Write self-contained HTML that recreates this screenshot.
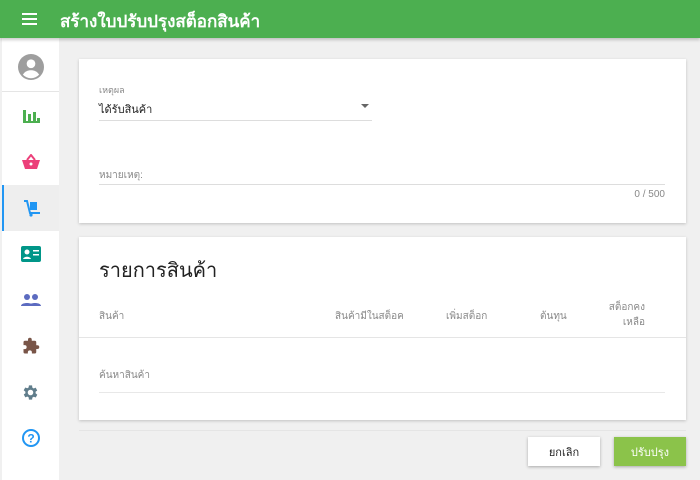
<!DOCTYPE html>
<html><head><meta charset="utf-8"><style>
*{box-sizing:border-box;margin:0;padding:0}
body{width:700px;height:480px;overflow:hidden;background:#f0f0f0;font-family:"Liberation Sans","DejaVu Sans",sans-serif;position:relative}
.hdr{position:absolute;left:0;top:0;width:700px;height:38px;background:#4caf50;box-shadow:0 2px 3px rgba(0,0,0,.2);z-index:2}
.hdr .t{position:absolute;left:60px;top:8px;color:#fff;font-size:17px;font-weight:bold}
.side{position:absolute;left:2px;top:38px;width:57px;height:442px;background:#fff}
.ic{position:absolute;left:0;width:57px;height:46px;display:flex;align-items:center;justify-content:center}
.card{position:absolute;left:79px;width:607px;background:#fff;box-shadow:0 1px 3px rgba(0,0,0,.2)}
.lbl{position:absolute;font-size:10px;color:#888}
.line{position:absolute;height:1px;background:#ddd}
.th{position:absolute;font-size:10px;color:#888}
.btn{position:absolute;top:437px;width:72px;height:29px;font-size:11px;display:flex;align-items:center;justify-content:center;box-shadow:0 1px 3px rgba(0,0,0,.3)}
</style></head><body>
<div class="hdr">
<svg style="position:absolute;left:22px;top:13px" width="15" height="12"><rect y="0" width="15" height="2" fill="#fff"/><rect y="5" width="15" height="2" fill="#fff"/><rect y="10" width="15" height="2" fill="#fff"/></svg>
<div class="t">สร้างใบปรับปรุงสต็อกสินค้า</div></div>
<div class="side">
<div class="ic" style="top:4px;height:50px;border-bottom:1px solid #e5e5e5"><svg width="26" height="26" viewBox="0 0 24 24"><circle cx="12" cy="12" r="12" fill="#9e9e9e"/><circle cx="12" cy="9" r="4" fill="#fff"/><path d="M4.5 19c2-3 4.5-4 7.5-4s5.5 1 7.5 4a10 10 0 0 1-15 0z" fill="#fff"/></svg></div>
<div class="ic" style="top:55px"><svg width="18" height="16"><rect x="1" y="2" width="3" height="13" fill="#4caf50"/><rect x="6" y="6" width="3" height="9" fill="#4caf50"/><rect x="11" y="4" width="3" height="11" fill="#4caf50"/><rect x="15" y="10" width="3" height="5" fill="#4caf50"/><rect x="1" y="13" width="17" height="2" fill="#4caf50"/></svg></div>
<div class="ic" style="top:101px"><svg width="18" height="16"><path d="M5 6L9 1 13 6" stroke="#ec407a" stroke-width="2" fill="none"/><path d="M0 6h18l-3 9H3z" fill="#ec407a"/><circle cx="9" cy="10" r="1.5" fill="#fff"/></svg></div>
<div class="ic" style="top:147px;background:#eee;border-left:2px solid #2196f3"><svg width="18" height="18"><path d="M1 2h3l3 12h10" stroke="#2196f3" stroke-width="2" fill="none"/><rect x="7" y="3" width="7" height="8" fill="#2196f3"/><circle cx="8" cy="16" r="1.6" fill="#2196f3"/></svg></div>
<div class="ic" style="top:193px"><svg width="20" height="16"><rect width="20" height="16" rx="2" fill="#009688"/><circle cx="6" cy="6" r="2.5" fill="#fff"/><path d="M2 13c1-3 7-3 8 0z" fill="#fff"/><rect x="12" y="4" width="6" height="1.5" fill="#fff"/><rect x="12" y="8" width="6" height="1.5" fill="#fff"/></svg></div>
<div class="ic" style="top:239px"><svg width="20" height="14"><circle cx="6" cy="4" r="3" fill="#5c6bc0"/><circle cx="14" cy="4" r="3" fill="#5c6bc0"/><path d="M0 13c0-4 12-4 12 0zM8 13c0-4 12-4 12 0z" fill="#5c6bc0"/></svg></div>
<div class="ic" style="top:285px"><svg width="18" height="18" viewBox="0 0 24 24"><path d="M20.5 11H19V7a2 2 0 0 0-2-2h-4V3.5a2.5 2.5 0 0 0-5 0V5H4a2 2 0 0 0-2 2v3.8h1.5a2.7 2.7 0 0 1 0 5.4H2V20a2 2 0 0 0 2 2h3.8v-1.5a2.7 2.7 0 0 1 5.4 0V22H17a2 2 0 0 0 2-2v-4h1.5a2.5 2.5 0 0 0 0-5z" fill="#795548"/></svg></div>
<div class="ic" style="top:331px"><svg width="19" height="19" viewBox="0 0 24 24"><path d="M19.4 13a7.5 7.5 0 0 0 0-2l2.1-1.6-2-3.5-2.5 1a7 7 0 0 0-1.7-1L15 3h-4l-.4 2.7a7 7 0 0 0-1.7 1l-2.5-1-2 3.5L6.6 11a7.5 7.5 0 0 0 0 2l-2.1 1.6 2 3.5 2.5-1a7 7 0 0 0 1.7 1L11 21h4l.4-2.7a7 7 0 0 0 1.7-1l2.5 1 2-3.5zM13 15.5a3.5 3.5 0 1 1 0-7 3.5 3.5 0 0 1 0 7z" fill="#607d8b" transform="translate(-1 0)"/></svg></div>
<div class="ic" style="top:377px"><svg width="18" height="18"><circle cx="9" cy="9" r="8" stroke="#2196f3" stroke-width="2" fill="none"/><text x="9" y="13.5" font-size="12" font-family="Liberation Sans" font-weight="bold" fill="#2196f3" text-anchor="middle">?</text></svg></div>
</div>

<div class="card" style="top:59px;height:164px">
<div class="lbl" style="left:20px;top:24px;font-size:9px">เหตุผล</div>
<div style="position:absolute;left:20px;top:41px;font-size:11px;color:#222">ได้รับสินค้า</div>
<svg style="position:absolute;left:282px;top:45px" width="8" height="4"><path d="M0 0h8L4 4z" fill="#666"/></svg>
<div class="line" style="left:20px;top:61px;width:273px"></div>
<div class="lbl" style="left:20px;top:109px">หมายเหตุ:</div>
<div class="line" style="left:20px;top:125px;width:566px"></div>
<div class="lbl" style="right:21px;top:130px">0 / 500</div>
</div>

<div class="card" style="top:237px;height:183px">
<div style="position:absolute;left:20px;top:17px;font-size:20px;color:#222">รายการสินค้า</div>
<div class="th" style="left:20px;top:72px">สินค้า</div>
<div class="th" style="left:256px;top:72px">สินค้ามีในสต็อค</div>
<div class="th" style="left:367px;top:72px">เพิ่มสต็อก</div>
<div class="th" style="left:461px;top:72px">ต้นทุน</div>
<div class="th" style="left:520px;top:63px;width:46px;text-align:right;line-height:15px">สต็อกคงเหลือ</div>
<div class="line" style="left:0;top:100px;width:607px;background:#e5e5e5"></div>
<div class="lbl" style="left:20px;top:131px;font-size:10px">ค้นหาสินค้า</div>
<div class="line" style="left:20px;top:155px;width:566px;background:#e8e8e8"></div>
</div>
<div class="line" style="left:79px;top:430px;width:607px;background:#e5e5e5"></div>

<div class="btn" style="left:528px;background:#fff;color:#222">ยกเลิก</div>
<div class="btn" style="left:614px;background:#8bc34a;color:#fff">ปรับปรุง</div>
</body></html>
